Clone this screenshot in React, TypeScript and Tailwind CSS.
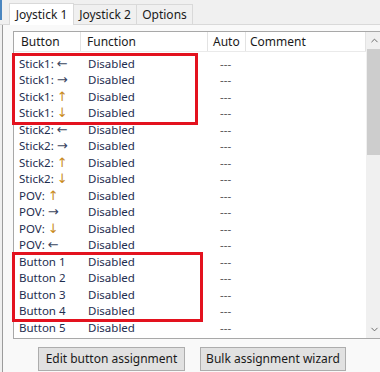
import { ChevronUp, ChevronDown } from "lucide-react";

type Row = { label: string; arrow?: string };

const rows: Row[] = [
  { label: "Stick1:", arrow: "←" },
  { label: "Stick1:", arrow: "→" },
  { label: "Stick1:", arrow: "↑" },
  { label: "Stick1:", arrow: "↓" },
  { label: "Stick2:", arrow: "←" },
  { label: "Stick2:", arrow: "→" },
  { label: "Stick2:", arrow: "↑" },
  { label: "Stick2:", arrow: "↓" },
  { label: "POV:", arrow: "↑" },
  { label: "POV:", arrow: "→" },
  { label: "POV:", arrow: "↓" },
  { label: "POV:", arrow: "←" },
  { label: "Button 1" },
  { label: "Button 2" },
  { label: "Button 3" },
  { label: "Button 4" },
  { label: "Button 5" },
];

function Arrow({ a }: { a: string }) {
  const vertical = a === "↑" || a === "↓";
  return (
    <span
      className={`text-[13px] ${vertical ? "text-[#c98a1c]" : "text-[#3a4660]"}`}
      style={{ fontFamily: '"DejaVu Sans", sans-serif' }}
    >
      {a}
    </span>
  );
}

export default function App() {
  return (
    <div
      className="relative w-[380px] h-[372px] overflow-hidden bg-[#f0f0f0] text-[12px] text-[#1e2d4f] flex flex-col"
      style={{ fontFamily: '"Noto Sans", "Open Sans", sans-serif' }}
    >
      {/* window edge */}
      <div className="absolute left-0 top-0 w-[2px] h-[20px] bg-[#4a86c0]" />

      {/* tabs */}
      <div className="h-[25px] flex items-end pl-[9px] border-b border-[#d9d9d9] shrink-0">
        <div className="h-[22px] w-[65px] bg-white border border-b-0 border-[#d9d9d9] flex items-center justify-center text-[#1a1a1a] -mb-px relative z-10">
          Joystick 1
        </div>
        <div className="h-[20px] w-[63px] bg-[#f0f0f0] border border-l-0 border-b-0 border-[#d9d9d9] flex items-center justify-center text-[#1a1a1a]">
          Joystick 2
        </div>
        <div className="h-[20px] w-[56px] bg-[#f0f0f0] border border-l-0 border-b-0 border-[#d9d9d9] flex items-center justify-center text-[#1a1a1a]">
          Options
        </div>
      </div>

      {/* tab page */}
      <div className="flex-1 ml-[2px] border-l border-[#9c9c9c] bg-[#f9f9f9] pt-[6px] pl-[10px] flex flex-col">
        <div className="w-[372px] h-[308px] bg-white border border-[#a8a8a8] flex shrink-0 overflow-hidden">
          <div className="w-[352px] flex flex-col">
            {/* header */}
            <div className="h-[20px] flex border-b border-[#eaeaea] text-[#1a1a1a] shrink-0">
              <div className="w-[67px] pl-[7px] flex items-center border-r border-[#e3e3e3]">Button</div>
              <div className="w-[127px] pl-[6px] flex items-center border-r border-[#e3e3e3]">Function</div>
              <div className="w-[38px] pl-[5px] flex items-center border-r border-[#e3e3e3]">Auto</div>
              <div className="w-[120px] pl-[4px] flex items-center border-r border-[#e3e3e3]">Comment</div>
            </div>
            {/* rows */}
            <div className="pt-[3px] flex flex-col text-[11.5px]">
              {rows.map((r, i) => (
                <div key={i} className="h-[16.5px] shrink-0 flex items-center leading-none">
                  <div className="w-[67px] pl-[5px] whitespace-nowrap">
                    {r.label}
                    {r.arrow && (
                      <>
                        {" "}
                        <Arrow a={r.arrow} />
                      </>
                    )}
                  </div>
                  <div className="w-[127px] pl-[7px]">Disabled</div>
                  <div className="w-[38px] pl-[12px] text-[#555]">---</div>
                  <div className="w-[120px]" />
                </div>
              ))}
            </div>
          </div>
          {/* scrollbar */}
          <div className="w-[17px] bg-[#f0f0f0] flex flex-col items-center">
            <div className="h-[17px] w-full flex items-center justify-center shrink-0">
              <ChevronUp size={11} strokeWidth={2} className="text-[#606060]" />
            </div>
            <div className="w-[15px] h-[106px] bg-[#cdcdcd] shrink-0" />
            <div className="flex-1" />
            <div className="h-[17px] w-full flex items-center justify-center shrink-0">
              <ChevronDown size={11} strokeWidth={2} className="text-[#606060]" />
            </div>
          </div>
        </div>

        {/* buttons */}
        <div className="pt-[8px] pl-[25px] flex gap-[15px]">
          <button className="w-[147px] h-[24px] bg-[#e1e1e1] border border-[#adadad] text-[#1a1a1a]">
            Edit button assignment
          </button>
          <button className="w-[146px] h-[24px] bg-[#e1e1e1] border border-[#adadad] text-[#1a1a1a]">
            Bulk assignment wizard
          </button>
        </div>
      </div>

      {/* red annotation boxes */}
      <div className="absolute left-[12px] top-[53px] w-[186px] h-[72px] border-[3px] border-[#e3121e]" />
      <div className="absolute left-[12px] top-[252px] w-[191px] h-[70px] border-[3px] border-[#e3121e]" />
    </div>
  );
}
